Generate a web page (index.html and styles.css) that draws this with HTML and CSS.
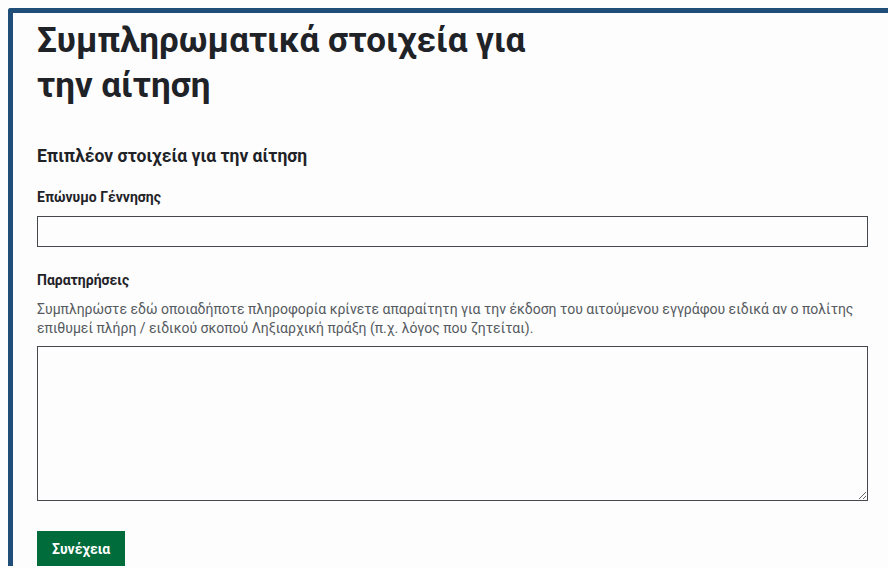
FILE: index.html
```html
<!DOCTYPE html>
<html lang="el">
<head>
<meta charset="utf-8">
<title>Συμπληρωματικά στοιχεία για την αίτηση</title>
<link rel="stylesheet" href="styles.css">
</head>
<body>
<main class="panel">
  <h1 class="page-title">Συμπληρωματικά στοιχεία για την αίτηση</h1>
  <form class="form">
    <h2 class="section-title">Επιπλέον στοιχεία για την αίτηση</h2>
    <div class="field">
      <label class="label" for="birth-surname">Επώνυμο Γέννησης</label>
      <input class="input" id="birth-surname" type="text">
    </div>
    <div class="field">
      <label class="label" for="notes">Παρατηρήσεις</label>
      <p class="hint">Συμπληρώστε εδώ οποιαδήποτε πληροφορία κρίνετε απαραίτητη για την έκδοση του αιτούμενου εγγράφου ειδικά αν ο πολίτης επιθυμεί πλήρη / ειδικού σκοπού Ληξιαρχική πράξη (π.χ. λόγος που ζητείται).</p>
      <textarea class="textarea" id="notes"></textarea>
    </div>
    <button class="button" type="button">Συνέχεια</button>
  </form>
</main>
</body>
</html>
```
FILE: styles.css
```css
html, body {
  background: #fdfdfd;
}

body {
  margin: 8px 0 0 8px;
  font-family: Roboto, "Noto Sans", sans-serif;
  color: #1f2328;
}

.panel {
  border-top: 5px solid #1f4e79;
  border-left: 5px solid #1f4e79;
  border-top-left-radius: 3px;
  padding: 5px 20px 0 24px;
}

.page-title {
  margin: 0;
  max-width: 540px;
  font-size: 35px;
  line-height: 45px;
  font-weight: 700;
  color: #1f2328;
}

.form {
  display: flex;
  flex-direction: column;
  align-items: flex-start;
  margin-top: 36px;
}

.section-title {
  margin: 0 0 19px;
  font-size: 17.5px;
  line-height: 24px;
  font-weight: 700;
}

.field {
  display: flex;
  flex-direction: column;
  width: 100%;
  margin-bottom: 23px;
}

.field:last-of-type {
  margin-bottom: 24px;
}

.label {
  font-size: 14px;
  line-height: 20px;
  font-weight: 700;
  margin-bottom: 9px;
}

.hint {
  margin: 0 0 8px;
  padding-top: 1px;
  font-size: 14px;
  line-height: 19px;
  color: #555a60;
}

.input,
.textarea {
  box-sizing: border-box;
  width: 100%;
  margin: 0;
  border: 1px solid #45484d;
  border-radius: 0;
  background: #fdfdfd;
  font: inherit;
}

.input {
  height: 31px;
}

.textarea {
  height: 155px;
  resize: vertical;
}

.button {
  margin-top: 6px;
  height: 35px;
  padding: 0 15px;
  border: 0;
  border-radius: 0;
  background: #006b3b;
  box-shadow: 0 2px 0 #3a3a3a;
  color: #ffffff;
  font-family: inherit;
  font-size: 14px;
  font-weight: 700;
}
```
